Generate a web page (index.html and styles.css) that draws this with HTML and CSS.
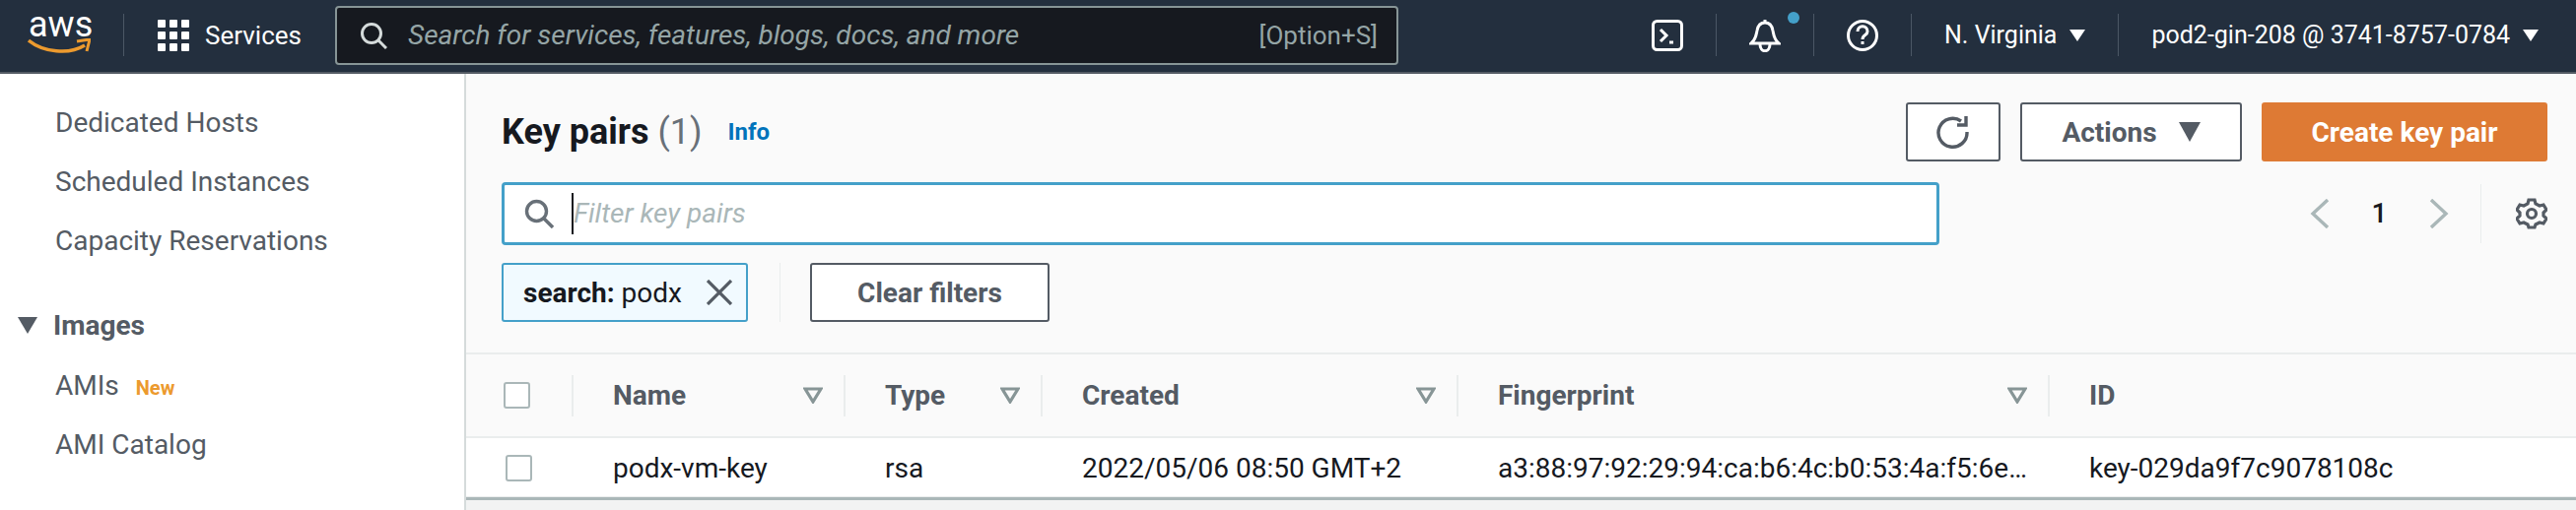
FILE: index.html
```html
<!DOCTYPE html>
<html lang="en">
<head>
  <meta charset="UTF-8" />
  <title>Key pairs</title>
  <link rel="stylesheet" href="styles.css">
</head>
<body>
  <!-- Top navigation -->
  <header class="topbar">
    <div class="logo">
      <span class="logo-text">aws</span>
      <svg class="logo-smile" width="64" height="17" viewBox="0 0 64 17">
        <path d="M1 2 C16 14 42 17 58 7" fill="none" stroke="#ec9a2e" stroke-width="3.4"/>
        <path d="M50 3 L63 1 L60 13" fill="none" stroke="#ec9a2e" stroke-width="3"/>
      </svg>
    </div>
    <span class="nav-divider nav-divider-logo"></span>
    <svg class="grid-icon" width="32" height="32" viewBox="0 0 32 32" fill="#fff">
      <rect x="0" y="0" width="8" height="8" rx="1"/><rect x="12" y="0" width="8" height="8" rx="1"/><rect x="24" y="0" width="8" height="8" rx="1"/>
      <rect x="0" y="12" width="8" height="8" rx="1"/><rect x="12" y="12" width="8" height="8" rx="1"/><rect x="24" y="12" width="8" height="8" rx="1"/>
      <rect x="0" y="24" width="8" height="8" rx="1"/><rect x="12" y="24" width="8" height="8" rx="1"/><rect x="24" y="24" width="8" height="8" rx="1"/>
    </svg>
    <span class="services">Services</span>
    <div class="global-search">
      <svg width="28" height="28" viewBox="0 0 28 28" fill="none" stroke="#d5dbdb" stroke-width="3">
        <circle cx="12" cy="12" r="9.5"/><path d="M19 19 L27 27"/>
      </svg>
      <span class="global-search-text">Search for services, features, blogs, docs, and more</span>
      <span class="global-search-key">[Option+S]</span>
    </div>
    <div class="nav-right">
      <svg width="32" height="32" viewBox="0 0 32 32" fill="none" stroke="#fff" stroke-width="3">
        <rect x="1.5" y="1.5" width="29" height="29" rx="4"/>
        <path d="M9 10 L15 16 L9 22"/><path d="M18 23 H22"/>
      </svg>
      <span class="nav-divider"></span>
      <div class="bell">
        <svg width="32" height="34" viewBox="0 0 32 34" fill="none" stroke="#fff" stroke-width="3">
          <path d="M2 25 C7 21 7 17 8 12 C9 6 12 4 16 4 C20 4 23 6 24 12 C25 17 25 21 30 25 Z"/>
          <path d="M16 1 V4"/><path d="M11 26 C11 35 21 35 21 26"/>
        </svg>
        <span class="bell-dot"></span>
      </div>
      <span class="nav-divider"></span>
      <svg width="32" height="32" viewBox="0 0 32 32" fill="none" stroke="#fff" stroke-width="3">
        <circle cx="16" cy="16" r="14.5"/>
        <path d="M11 12 C11 5 21 5 21 12 C21 16 16 15 16 20"/><path d="M16 22 V25"/>
      </svg>
      <span class="nav-divider"></span>
      <span class="nav-label region">N. Virginia</span>
      <span class="caret-white caret-region"></span>
      <span class="nav-divider"></span>
      <span class="nav-label account">pod2-gin-208 @ 3741-8757-0784</span>
      <span class="caret-white caret-account"></span>
    </div>
  </header>

  <div class="layout">
    <!-- Side navigation -->
    <nav class="sidenav">
      <a class="side-link">Dedicated Hosts</a>
      <a class="side-link">Scheduled Instances</a>
      <a class="side-link">Capacity Reservations</a>
      <div class="side-section"><span class="caret-dark"></span>Images</div>
      <a class="side-link">AMIs <span class="badge-new">New</span></a>
      <a class="side-link">AMI Catalog</a>
    </nav>

    <main class="content">
      <div class="toolbar">
        <div class="title-row">
          <h1 class="title">Key pairs <span class="count">(1)</span></h1>
          <a class="info">Info</a>
          <div class="actions">
            <button class="btn btn-icon">
              <svg width="36" height="36" viewBox="0 0 36 36" fill="none" stroke="#545b64" stroke-width="3.4">
                <path d="M26 7 A14.5 14.5 0 1 0 32 18"/><path d="M31 2 V11 H22"/>
              </svg>
            </button>
            <button class="btn btn-actions">Actions <span class="caret-dark caret-btn"></span></button>
            <button class="btn btn-primary">Create key pair</button>
          </div>
        </div>
        <div class="filter-row">
          <div class="filter-input">
            <svg width="30" height="30" viewBox="0 0 30 30" fill="none" stroke="#687078" stroke-width="3.4">
              <circle cx="12.5" cy="12.5" r="10"/><path d="M20 20 L29 29"/>
            </svg>
            <span class="cursor"></span>
            <span class="filter-placeholder">Filter key pairs</span>
          </div>
          <div class="pager">
            <svg width="20" height="30" viewBox="0 0 20 30" fill="none" stroke="#aab7b8" stroke-width="3.4"><path d="M18 1 L3 15 L18 29"/></svg>
            <span class="page-num">1</span>
            <svg width="20" height="30" viewBox="0 0 20 30" fill="none" stroke="#aab7b8" stroke-width="3.4"><path d="M2 1 L17 15 L2 29"/></svg>
            <span class="pager-divider"></span>
            <svg width="32" height="32" viewBox="0 0 32 32" fill="none" stroke="#545b64" stroke-width="3.2">
              <path d="M13 2 H19 L20 6 L24 8 L28 7 L31 12 L28 15 V18 L31 21 L28 26 L24 25 L20 27 L19 30 H13 L12 27 L8 25 L4 26 L1 21 L4 18 V15 L1 12 L4 7 L8 8 L12 6 Z"/>
              <circle cx="16" cy="16" r="4.5"/>
            </svg>
          </div>
        </div>
        <div class="chip-row">
          <div class="chip">
            <span><b>search:</b> podx</span>
            <svg width="26" height="26" viewBox="0 0 26 26" fill="none" stroke="#545b64" stroke-width="3.2"><path d="M1 1 L25 25 M25 1 L1 25"/></svg>
          </div>
          <span class="chip-divider"></span>
          <button class="btn btn-clear">Clear filters</button>
        </div>
      </div>

      <div class="table">
        <div class="table-row table-head">
          <div class="cell cell-check"><span class="checkbox"></span></div>
          <div class="cell col-name">Name <svg class="sort" width="20" height="17" viewBox="0 0 20 17" fill="none" stroke="#879596" stroke-width="3.2"><path d="M2 2 H18 L10 15 Z"/></svg></div>
          <div class="cell col-type">Type <svg class="sort" width="20" height="17" viewBox="0 0 20 17" fill="none" stroke="#879596" stroke-width="3.2"><path d="M2 2 H18 L10 15 Z"/></svg></div>
          <div class="cell col-created">Created <svg class="sort" width="20" height="17" viewBox="0 0 20 17" fill="none" stroke="#879596" stroke-width="3.2"><path d="M2 2 H18 L10 15 Z"/></svg></div>
          <div class="cell col-print">Fingerprint <svg class="sort" width="20" height="17" viewBox="0 0 20 17" fill="none" stroke="#879596" stroke-width="3.2"><path d="M2 2 H18 L10 15 Z"/></svg></div>
          <div class="cell col-id">ID</div>
        </div>
        <div class="table-row table-body">
          <div class="cell cell-check"><span class="checkbox"></span></div>
          <div class="cell col-name">podx-vm-key</div>
          <div class="cell col-type">rsa</div>
          <div class="cell col-created">2022/05/06 08:50 GMT+2</div>
          <div class="cell col-print"><span class="truncate">a3:88:97:92:29:94:ca:b6:4c:b0:53:4a:f5:6e:01:7d:22:9c</span></div>
          <div class="cell col-id">key-029da9f7c9078108c</div>
        </div>
      </div>
    </main>
  </div>
</body>
</html>
```

FILE: styles.css
```css
* {
  box-sizing: border-box;
}

body {
  margin: 0;
  height: 518px;
  overflow: hidden;
  font-family: Roboto, Arial, sans-serif;
  font-size: 28px;
  color: #16191f;
  background: #fff;
}

/* Top navigation */
.topbar {
  display: flex;
  align-items: center;
  height: 75px;
  padding-left: 28px;
  padding-bottom: 2px;
  background: #232f3e;
  border-bottom: 2px solid #545b64;
}

.logo {
  position: relative;
  width: 62px;
  height: 40px;
  margin-top: -4px;
}

.logo-text {
  position: absolute;
  top: -10px;
  left: 1px;
  font-size: 36px;
  color: #fff;
}

.logo-smile {
  position: absolute;
  top: 25px;
  left: 0;
}

.nav-divider {
  width: 1px;
  height: 43px;
  background: #4b5765;
}

.nav-divider-logo {
  margin-left: 35px;
  margin-right: 34px;
}

.services {
  margin-left: 16px;
  color: #fff;
  font-size: 26px;
}

.global-search {
  display: flex;
  align-items: center;
  width: 1079px;
  height: 60px;
  margin-left: 34px;
  padding: 0 19px 0 23px;
  background: #16191f;
  border: 2px solid #879596;
  border-radius: 4px;
  color: #95a5a6;
}

.global-search-text {
  margin-left: 21px;
  font-style: italic;
  font-size: 28px;
}

.global-search-key {
  margin-left: auto;
  font-size: 26px;
}

.nav-right {
  display: flex;
  align-items: center;
  margin-left: 257px;
  color: #fff;
}

.nav-right > .nav-divider {
  margin: 0 33px;
}

.bell {
  position: relative;
  width: 32px;
  height: 34px;
}

.bell-dot {
  position: absolute;
  top: -7px;
  left: 39px;
  width: 12px;
  height: 12px;
  border-radius: 50%;
  background: #44a0c9;
}

.nav-label {
  font-size: 25px;
}

.caret-white {
  width: 0;
  height: 0;
  margin-left: 13px;
  border-left: 8px solid transparent;
  border-right: 8px solid transparent;
  border-top: 12px solid #fff;
}

.caret-account {
  margin-left: 13px;
}

/* Layout */
.layout {
  display: flex;
  height: 443px;
}

.sidenav {
  display: flex;
  flex-direction: column;
  width: 473px;
  padding: 31px 0 0 56px;
  flex-shrink: 0;
  border-right: 2px solid #d5dbdb;
  color: #545b64;
}

.side-link {
  height: 60px;
  line-height: 38px;
}

.side-section {
  display: flex;
  align-items: center;
  margin: 25px 0 24px -38px;
  font-weight: 700;
  height: 38px;
}

.caret-dark {
  width: 0;
  height: 0;
  margin-right: 16px;
  border-left: 10px solid transparent;
  border-right: 10px solid transparent;
  border-top: 17px solid #545b64;
}

.badge-new {
  margin-left: 10px;
  font-size: 20px;
  font-weight: 700;
  color: #ec9a2e;
}

.content {
  flex: 1;
  min-width: 0;
  background: #f2f3f3;
}

.toolbar {
  height: 285px;
  padding: 29px 29px 0 36px;
  background: #fafafa;
  border-bottom: 2px solid #eaeded;
}

.title-row {
  display: flex;
  align-items: center;
  height: 60px;
}

.title {
  margin: 0;
  font-size: 36px;
  font-weight: 700;
  line-height: 44px;
}

.count {
  font-weight: 400;
  color: #687078;
}

.info {
  margin-left: 26px;
  font-size: 24px;
  font-weight: 700;
  color: #0073bb;
}

.actions {
  display: flex;
  gap: 20px;
  margin-left: auto;
}

.btn {
  height: 60px;
  padding: 0;
  font-family: inherit;
  font-size: 28px;
  font-weight: 700;
  border: 2px solid #545b64;
  border-radius: 3px;
  background: #fff;
  color: #545b64;
}

.btn-icon {
  display: flex;
  align-items: center;
  justify-content: center;
  width: 96px;
}

.btn-actions {
  display: flex;
  align-items: center;
  justify-content: center;
  width: 225px;
}

.caret-btn {
  margin: 0 0 0 22px;
  border-top-width: 20px;
  border-left-width: 11px;
  border-right-width: 11px;
}

.btn-primary {
  width: 290px;
  background: #de7a34;
  border-color: #de7a34;
  color: #fff;
}

.filter-row {
  display: flex;
  align-items: center;
  height: 65px;
  margin-top: 20px;
}

.filter-input {
  display: flex;
  align-items: center;
  width: 1459px;
  height: 64px;
  padding-left: 20px;
  background: #fff;
  border: 3px solid #44a0c9;
  border-radius: 4px;
}

.cursor {
  width: 2px;
  height: 42px;
  margin-left: 18px;
  background: #16191f;
}

.filter-placeholder {
  font-style: italic;
  color: #aab7b8;
}

.pager {
  display: flex;
  align-items: center;
  margin-left: auto;
}

.page-num {
  width: 101px;
  text-align: center;
  font-weight: 500;
}

.pager-divider {
  width: 1px;
  height: 60px;
  margin: 0 35px 0 32px;
  background: #eaeded;
}

.chip-row {
  display: flex;
  align-items: center;
  margin-top: 18px;
}

.chip {
  display: flex;
  align-items: center;
  justify-content: space-between;
  width: 250px;
  height: 60px;
  padding: 0 14px 0 20px;
  background: #f1faff;
  border: 2px solid #44a0c9;
  border-radius: 3px;
}

.chip-divider {
  width: 1px;
  height: 60px;
  margin: 0 30px 0 32px;
  background: #eaeded;
}

.btn-clear {
  width: 243px;
}

/* Table */
.table-row {
  display: flex;
  align-items: center;
}

.table-head {
  height: 85px;
  background: #fafafa;
  border-bottom: 2px solid #eaeded;
  font-weight: 700;
  color: #545b64;
}

.table-body {
  height: 63px;
  background: #fff;
  border-bottom: 3px solid #aab7b8;
  box-shadow: inset 0 -1px 0 #eaeded;
}

.cell {
  display: flex;
  align-items: center;
  justify-content: space-between;
  height: 42px;
  padding: 0 21px 0 40px;
  flex-shrink: 0;
}

.table-head .cell + .cell {
  border-left: 2px solid #eaeded;
}

.table-body .cell {
  border-left: 2px solid transparent;
}

.cell-check {
  width: 107px;
  padding: 0 0 0 38px;
}

.col-name {
  width: 276px;
}

.col-type {
  width: 200px;
}

.col-created {
  width: 422px;
  white-space: nowrap;
}

.col-print {
  width: 600px;
}

.col-id {
  flex: 1;
}

.checkbox {
  display: block;
  width: 27px;
  height: 27px;
  background: #fff;
  border: 2px solid #aab7b8;
  border-radius: 3px;
}

.truncate {
  overflow: hidden;
  white-space: nowrap;
  text-overflow: ellipsis;
}
```
